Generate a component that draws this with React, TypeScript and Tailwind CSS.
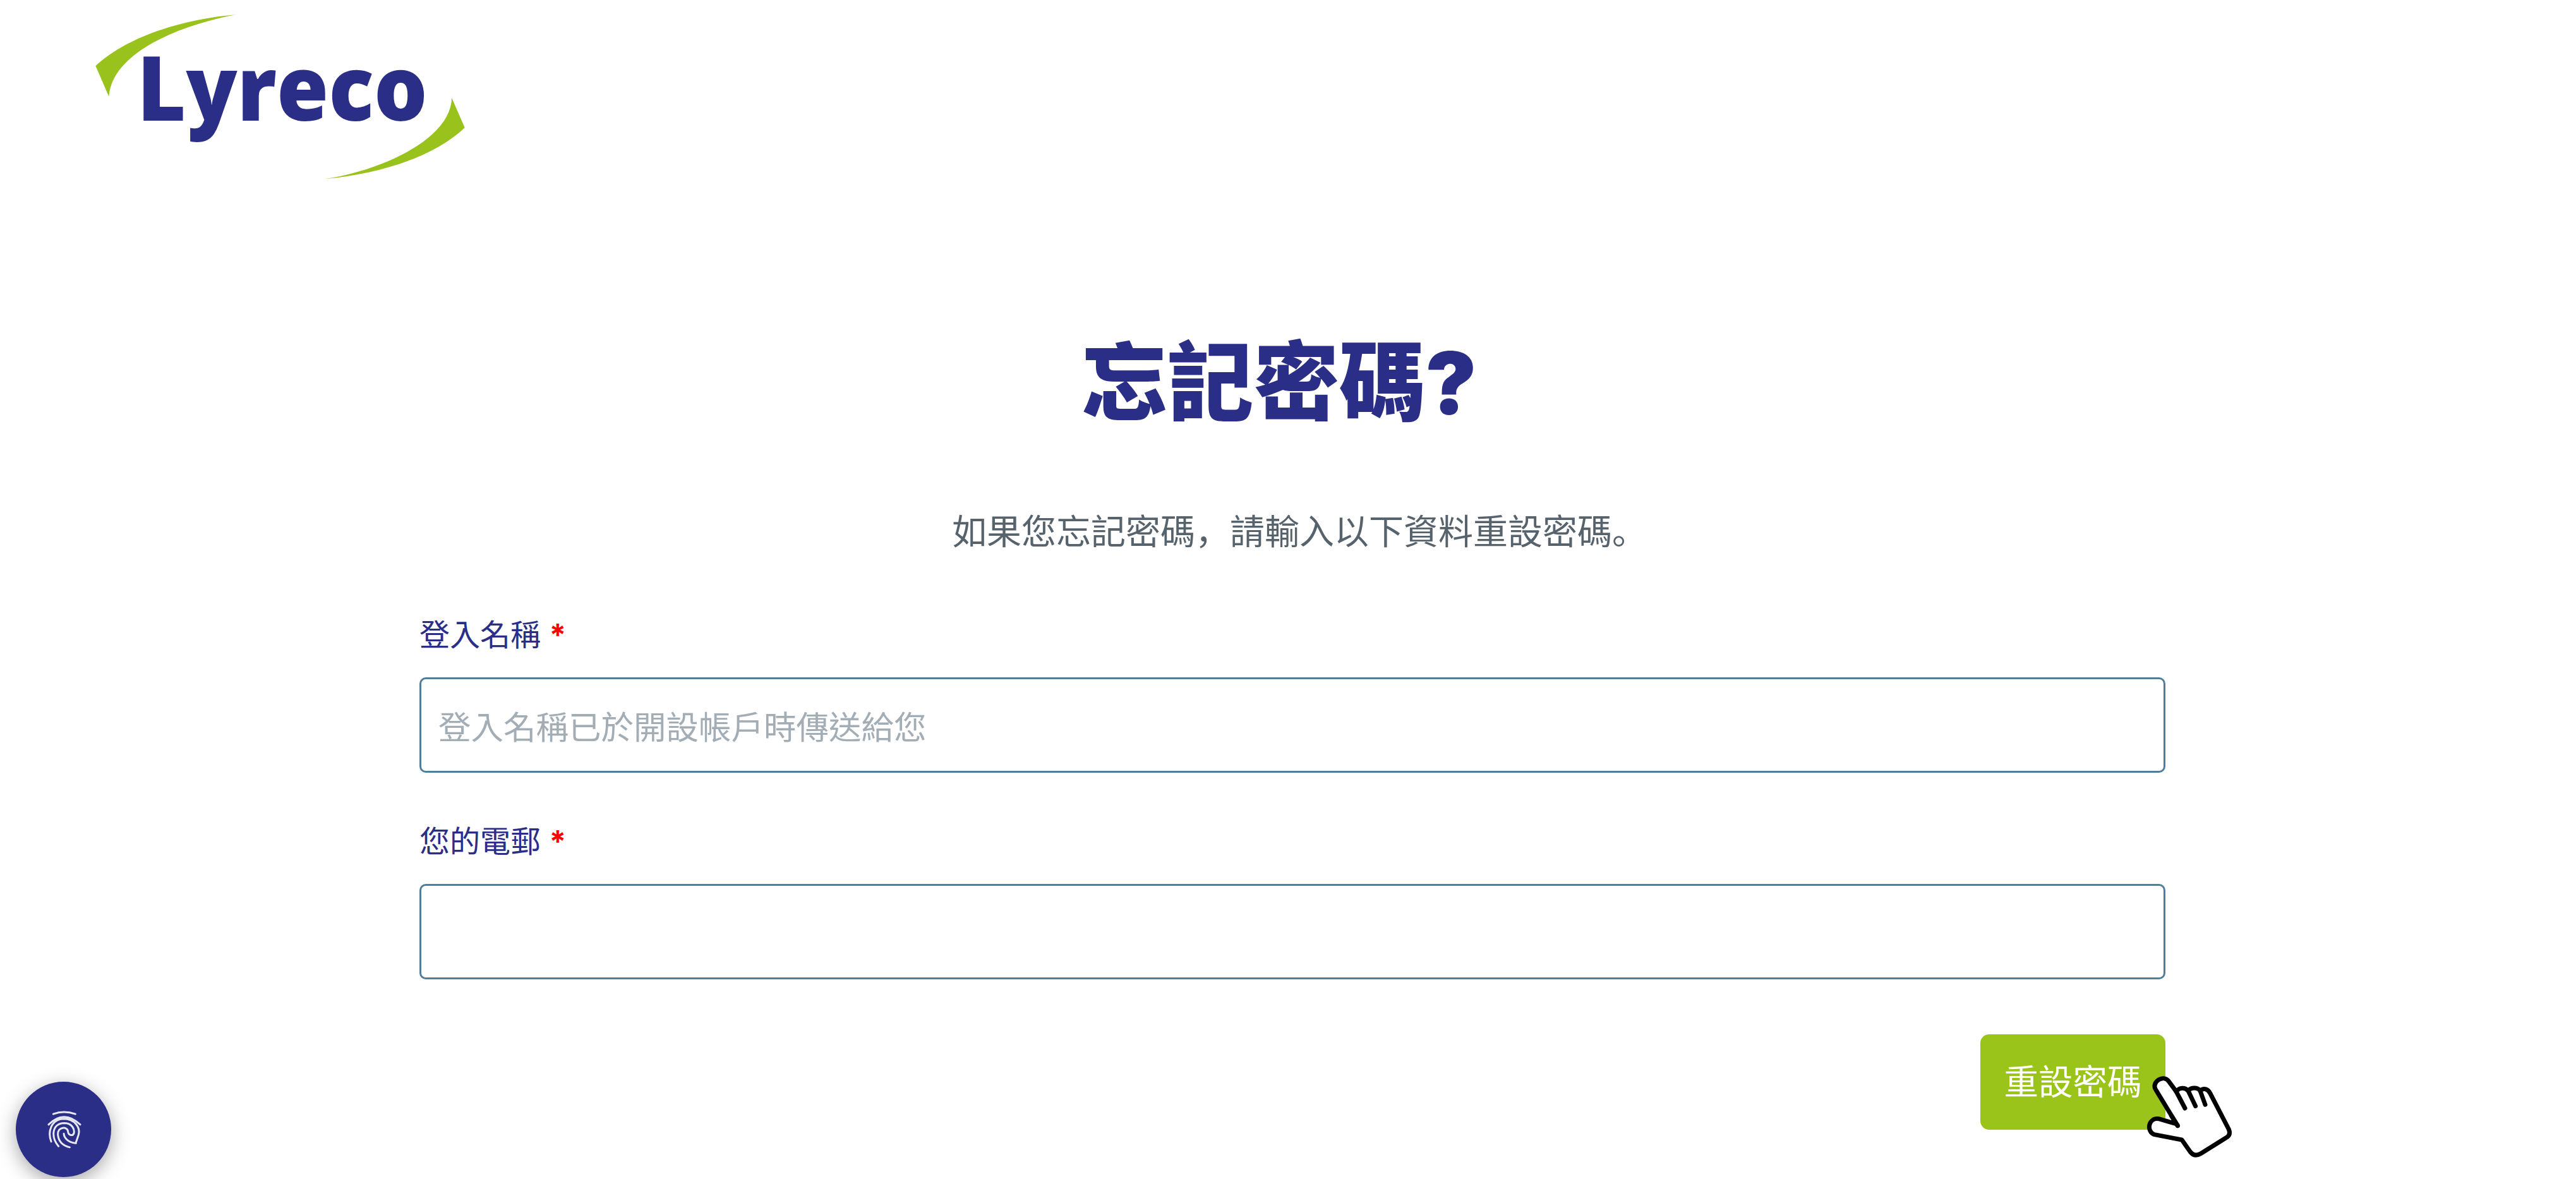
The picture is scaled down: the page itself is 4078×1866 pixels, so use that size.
const CJK = "font-['Inter','Noto_Sans_CJK_TC',sans-serif]";

function Logo() {
  return (
    <svg width={700} height={310} viewBox="0 0 1568 930" preserveAspectRatio="none" className="block overflow-visible">
      <path d="M115 313 C230 170 430 90 612 70 C430 115 175 240 162 458 Z" fill="#99c21c" />
      <path d="M1378 465 C1375 660 1130 810 927 850 C1130 825 1320 740 1424 606 Z" fill="#99c21c" />
      <text
        x={262}
        y={572}
        textLength={1030}
        lengthAdjust="spacingAndGlyphs"
        fill="#2b2e87"
        fontFamily="'Open Sans', sans-serif"
        fontWeight={800}
        fontSize={425}
      >
        Lyreco
      </text>
    </svg>
  );
}

function HandCursor() {
  return (
    <svg
      width={500}
      height={266}
      viewBox="0 0 1500 798"
      className="pointer-events-none absolute left-[-56px] top-[-38px]"
      fill="none"
    >
      <path
        d="M1105 548 L1000 375 C980 340 1040 300 1065 340 L1098 385 C1115 365 1140 365 1155 382 C1170 365 1200 365 1212 382 C1230 365 1250 375 1260 395 L1348 565 C1358 590 1345 600 1335 605 L1215 680 C1190 695 1175 685 1165 672 L1125 615 L995 590 C955 575 965 510 1015 515 L1100 540 Z"
        fill="#fff"
        stroke="#000"
        strokeWidth={21}
        strokeLinejoin="round"
        strokeLinecap="round"
      />
      <path
        d="M1105 548 L1075 500 M1098 385 L1140 465 M1155 382 L1190 455 M1212 382 L1236 448"
        stroke="#000"
        strokeWidth={21}
        strokeLinecap="round"
      />
    </svg>
  );
}

function FingerprintIcon() {
  return (
    <svg width={60} height={67} viewBox="210 220 180 200" fill="none" stroke="#e6e7f2" strokeWidth={9} strokeLinecap="round">
      <path d="M250 247 Q300 228 355 247" />
      <path d="M228 297 Q300 225 378 297" />
      <path d="M240 378 C222 330 240 272 300 270 C350 270 380 310 370 345 C362 372 355 385 358 385" />
      <path d="M275 400 C240 360 240 292 302 290 C340 290 352 320 348 338 C344 352 322 350 320 330 C318 305 270 305 272 345 C275 380 300 398 328 405" />
      <path d="M300 340 C302 365 325 382 355 385" />
    </svg>
  );
}

function Field({ label, placeholder }: { label: string; placeholder?: string }) {
  return (
    <div>
      <label className="block h-[50px] text-[48px] leading-[54px] text-[#2b2e87]">
        {label} <span className="font-bold text-[#f00]">*</span>
      </label>
      <input
        type="text"
        placeholder={placeholder}
        className="mt-[44px] block h-[151px] w-full rounded-[10px] border-[3px] border-[#4f7f98] bg-white px-[27px] pt-[6px] text-[51.5px] outline-none placeholder:text-[#a3adb5]"
      />
    </div>
  );
}

export default function App() {
  return (
    <div className={`relative h-[1866px] overflow-hidden bg-white ${CJK}`}>
      <header className="pl-[100px]">
        <Logo />
      </header>
      <main className="ml-[664px] w-[2764px]">
        <h1 className="mt-[216px] pr-[42px] text-center text-[136px] leading-[160px] font-black text-[#2b2e87]">
          忘記密碼?
        </h1>
        <p className="mt-[115px] pl-[22px] text-center font-['Inter','Noto_Sans_CJK_SC',sans-serif] text-[55px] leading-[80px] text-[#56626c]">
          如果您忘記密碼，請輸入以下資料重設密碼。
        </p>
        <form className="mt-[97px] flex flex-col gap-[82px]">
          <Field label="登入名稱" placeholder="登入名稱已於開設帳戶時傳送給您" />
          <Field label="您的電郵" />
        </form>
        <div className="mt-[87px] flex justify-end">
          <button type="button" className="relative h-[151px] w-[293px] rounded-[14px] bg-[#9bc41b] text-center text-[54.5px] text-white">
            重設密碼
            <HandCursor />
          </button>
        </div>
      </main>
      <button
        type="button"
        className="absolute bottom-[3px] left-[25px] flex h-[151px] w-[151px] items-center justify-center rounded-full bg-[#2b2e87] shadow-[0_8px_30px_rgba(0,0,0,0.35)]"
      >
        <FingerprintIcon />
      </button>
    </div>
  );
}
